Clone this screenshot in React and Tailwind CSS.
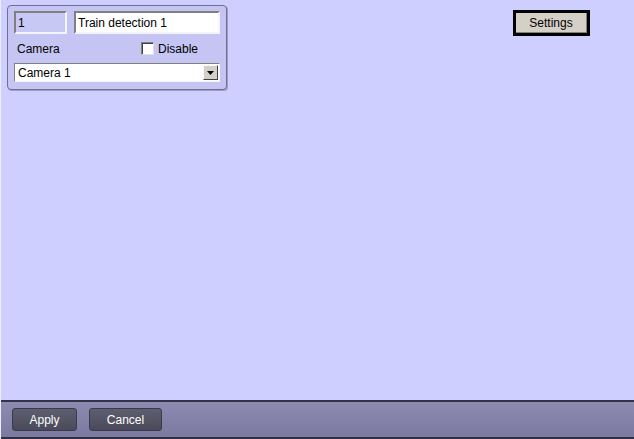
import React from "react";

export default function App() {
  return (
    <div
      className="w-[634px] h-[439px] flex flex-col bg-[#cfcfff] border-l border-[#ececfa] text-[12px] text-black"
      style={{ fontFamily: '"Liberation Sans", Arial, sans-serif' }}
    >
      <div className="flex-1 flex items-start justify-between pl-[6px] pr-[44px] pt-[5px]">
        {/* detector group */}
        <div className="w-[220px] h-[85px] rounded-[4px] border border-[#6f6f90] bg-[#c5c5f3] shadow-[1px_1px_0_#9d9dc8] px-[6px] pt-[5px] flex flex-col">
          <div className="flex gap-[7px]">
            <div className="w-[53px] h-[23px] bg-[#c8c8f4] border-2 border-t-[#808080] border-l-[#808080] border-r-[#f4f4ff] border-b-[#f4f4ff] flex items-center px-[2px]">
              1
            </div>
            <div className="w-[146px] h-[23px] bg-white border-2 border-t-[#808080] border-l-[#808080] border-r-[#f4f4ff] border-b-[#f4f4ff] flex items-center px-[2px]">
              Train detection 1
            </div>
          </div>
          <div className="flex items-center h-[29px] pl-[3px]">
            <span className="w-[124px]">Camera</span>
            <label className="flex items-center gap-[4px]">
              <span className="w-[13px] h-[13px] bg-white border border-t-[#808080] border-l-[#808080] border-r-[#e0e0e0] border-b-[#e0e0e0] shadow-[inset_1px_1px_0_#404040]"></span>
              <span>Disable</span>
            </label>
          </div>
          <div className="w-[206px] h-[19px] bg-white border border-t-[#808080] border-l-[#808080] border-r-[#f4f4ff] border-b-[#f4f4ff] flex items-center">
            <span className="flex-1 pl-[3px]">Camera 1</span>
            <span className="w-[15px] h-[15px] mr-[1px] bg-[#d4d0c8] border border-t-[#f8f8f8] border-l-[#f8f8f8] border-r-[#404040] border-b-[#404040] flex items-center justify-center">
              <svg width="7" height="4" viewBox="0 0 7 4">
                <path d="M0 0h7L3.5 4z" fill="#000" />
              </svg>
            </span>
          </div>
        </div>

        {/* settings */}
        <div className="mt-[5px] w-[77px] h-[26px] border-[3px] border-black bg-[#d4d0c8] flex items-center justify-center">
          <div className="w-full h-full border-b border-r border-[#808080] flex items-center justify-center">
            Settings
          </div>
        </div>
      </div>

      {/* bottom bar */}
      <div className="h-[39px] border-t-2 border-b-2 border-t-[#32324a] border-b-[#2e2e44] bg-gradient-to-b from-[#8d8bb0] to-[#7b79a0] flex items-center gap-[12px] pl-[11px]">
        <button className="w-[65px] h-[23px] rounded-[3px] border border-[#3a3a4a] bg-gradient-to-b from-[#5f5e70] to-[#4a4a5a] text-white text-[12px]">
          Apply
        </button>
        <button className="w-[73px] h-[23px] rounded-[3px] border border-[#3a3a4a] bg-gradient-to-b from-[#5f5e70] to-[#4a4a5a] text-white text-[12px]">
          Cancel
        </button>
      </div>
    </div>
  );
}
